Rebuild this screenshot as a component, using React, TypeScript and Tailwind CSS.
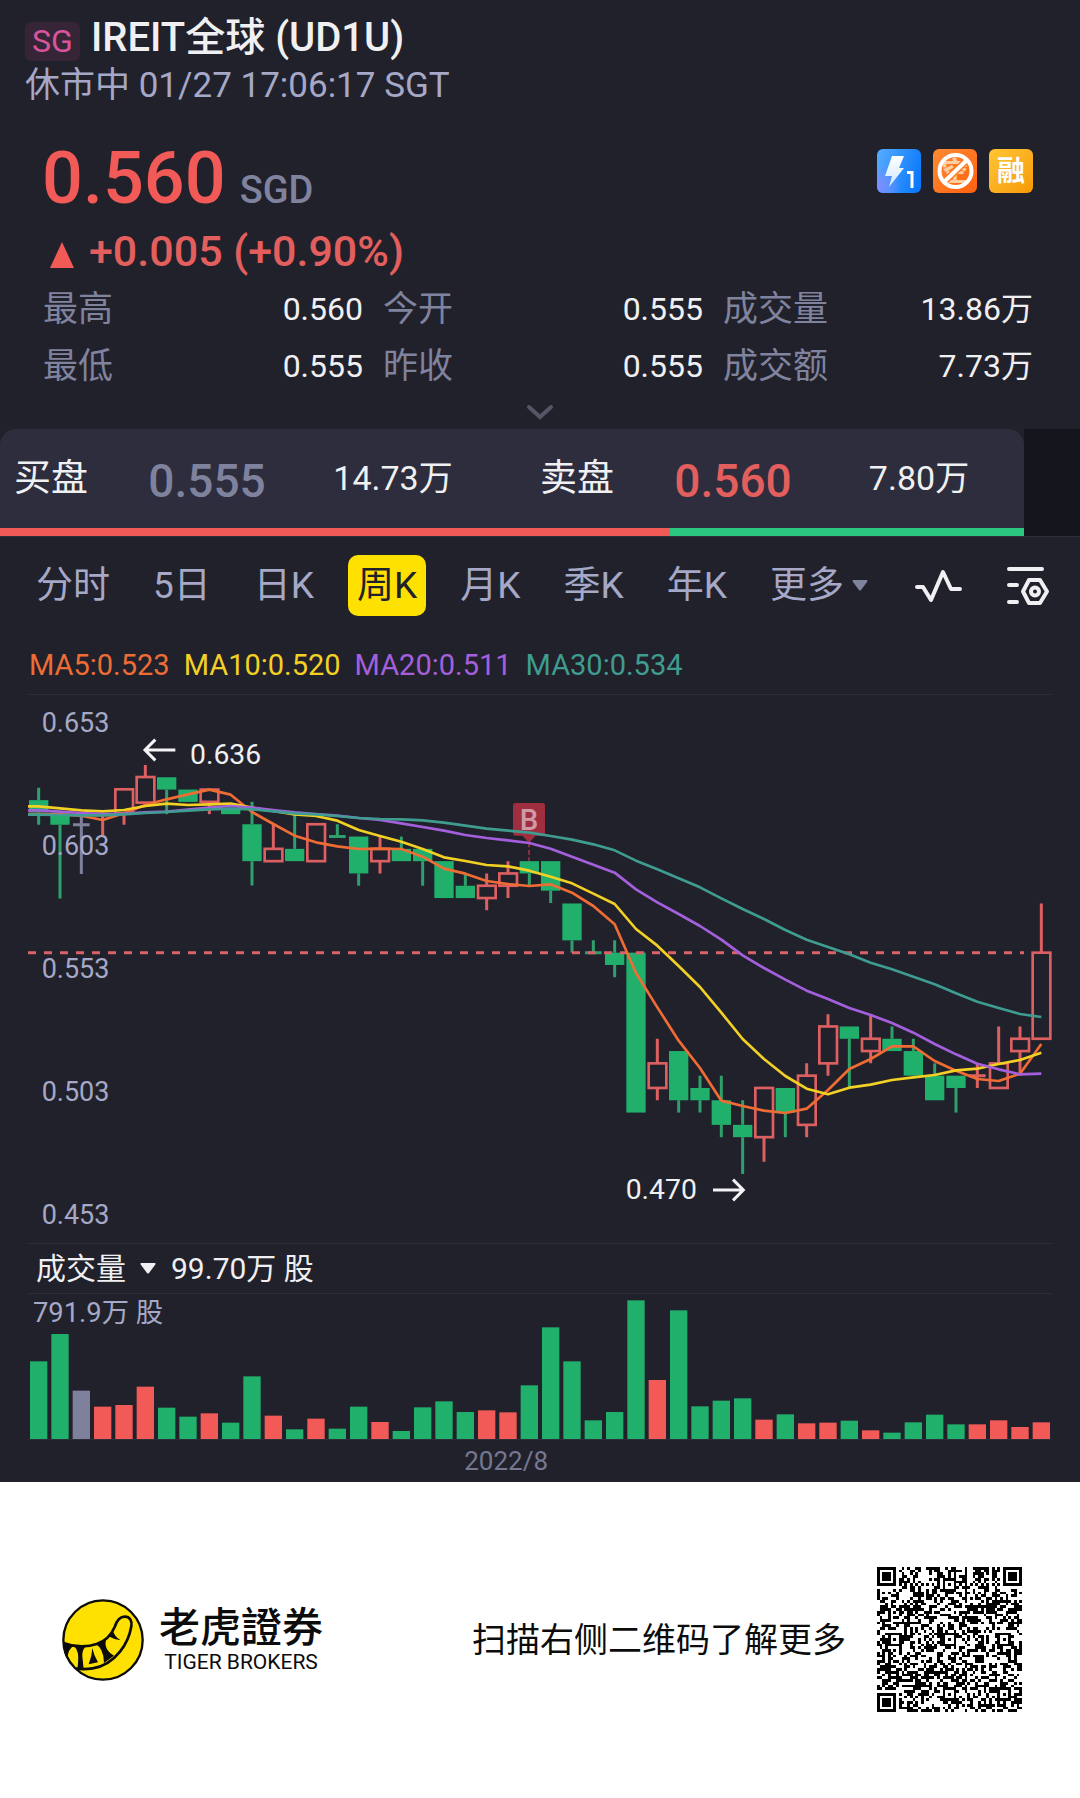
import { useMemo, useState } from "react";

type Tone = "up" | "down" | "flat";

// [tone, high, body top, body bottom, low, volume]
type Candle = [Tone, number, number, number, number, number];

const CANDLES: Candle[] = [
  ["down", 0.627, 0.622, 0.617, 0.612, 233],
  ["down", 0.617, 0.617, 0.612, 0.582, 315],
  ["flat", 0.616, 0.612, 0.612, 0.592, 145],
  ["up", 0.616, 0.616, 0.616, 0.607, 97],
  ["up", 0.6264, 0.6264, 0.6167, 0.612, 102],
  ["up", 0.6363, 0.6314, 0.621, 0.621, 157],
  ["down", 0.6313, 0.6313, 0.6263, 0.6163, 94],
  ["down", 0.6263, 0.6263, 0.6213, 0.6213, 67],
  ["up", 0.6263, 0.6263, 0.6213, 0.6163, 77],
  ["down", 0.6185, 0.6185, 0.6163, 0.6163, 49],
  ["down", 0.6213, 0.6122, 0.5972, 0.5873, 188],
  ["up", 0.6122, 0.6022, 0.5972, 0.5972, 70],
  ["down", 0.616, 0.6022, 0.5972, 0.5972, 29],
  ["up", 0.6122, 0.6122, 0.5972, 0.5972, 61],
  ["down", 0.6122, 0.6072, 0.6072, 0.6072, 31],
  ["down", 0.6072, 0.6072, 0.5922, 0.5872, 97],
  ["up", 0.6072, 0.6022, 0.5972, 0.5922, 51],
  ["down", 0.6072, 0.6022, 0.5972, 0.5972, 24],
  ["down", 0.6022, 0.6022, 0.5972, 0.5872, 95],
  ["down", 0.5972, 0.5972, 0.5822, 0.5822, 113],
  ["down", 0.5922, 0.5872, 0.5822, 0.5822, 81],
  ["up", 0.5922, 0.5872, 0.5822, 0.5772, 86],
  ["up", 0.5972, 0.5922, 0.5872, 0.5822, 80],
  ["down", 0.5972, 0.5972, 0.5922, 0.5872, 161],
  ["down", 0.5972, 0.5972, 0.5852, 0.5802, 335],
  ["down", 0.58, 0.58, 0.565, 0.56, 233],
  ["down", 0.565, 0.56, 0.56, 0.56, 56],
  ["down", 0.565, 0.56, 0.555, 0.55, 81],
  ["down", 0.56, 0.56, 0.495, 0.495, 416],
  ["up", 0.525, 0.515, 0.505, 0.5, 177],
  ["down", 0.52, 0.52, 0.5, 0.495, 386],
  ["down", 0.51, 0.505, 0.5, 0.495, 98],
  ["down", 0.51, 0.5, 0.49, 0.485, 115],
  ["down", 0.5, 0.49, 0.485, 0.47, 122],
  ["up", 0.505, 0.505, 0.485, 0.475, 58],
  ["down", 0.505, 0.505, 0.495, 0.485, 74],
  ["up", 0.515, 0.51, 0.49, 0.485, 47],
  ["up", 0.535, 0.53, 0.515, 0.51, 49],
  ["down", 0.53, 0.53, 0.525, 0.505, 55],
  ["up", 0.535, 0.525, 0.52, 0.515, 26],
  ["down", 0.53, 0.525, 0.52, 0.52, 19],
  ["down", 0.525, 0.52, 0.51, 0.51, 50],
  ["down", 0.515, 0.51, 0.5, 0.5, 73],
  ["down", 0.51, 0.51, 0.505, 0.495, 44],
  ["up", 0.515, 0.51, 0.51, 0.505, 44],
  ["up", 0.53, 0.515, 0.505, 0.505, 56],
  ["up", 0.53, 0.525, 0.52, 0.51, 36],
  ["up", 0.58, 0.56, 0.525, 0.525, 50],
];

// Moving averages, already in chart units (three units to a pixel)
const AVERAGES = [
  {
    color: "#ef6d35",
    points: [
      357, 358, 362, 375, 355, 330, 313, 298, 284, 299, 351, 387, 422, 442, 454, 462, 461, 462, 485, 521, 536, 558,
      567, 573, 568, 593, 633, 688, 834, 937, 1037, 1119, 1217, 1233, 1247, 1254, 1241, 1185, 1122, 1092, 1054, 1054,
      1098, 1127, 1152, 1158, 1136, 1047,
    ],
  },
  {
    color: "#f3d024",
    points: [
      334, 340, 346, 349, 345, 333, 326, 330, 328, 326, 338, 348, 358, 363, 377, 405, 423, 440, 462, 487, 498, 510,
      514, 527, 545, 565, 596, 627, 702, 752, 813, 876, 953, 1032, 1092, 1143, 1181, 1198, 1178, 1169, 1155, 1147,
      1140, 1126, 1121, 1107, 1095, 1073,
    ],
  },
  {
    color: "#a460dc",
    points: [
      346, 350, 354, 357, 356, 352, 350, 344, 338, 333, 338, 345, 352, 357, 362, 369, 375, 385, 396, 407, 420, 429,
      436, 444, 461, 485, 509, 533, 583, 622, 657, 693, 734, 781, 819, 854, 887, 912, 939, 960, 984, 1013, 1047, 1078,
      1106, 1123, 1138, 1136,
    ],
  },
  {
    color: "#3f9c90",
    points: [
      359, 360, 361, 361, 358, 354, 351, 347, 343, 341, 343, 349, 355, 358, 363, 369, 372, 373, 376, 383, 392, 401,
      407, 413, 423, 434, 448, 466, 497, 523, 550, 577, 610, 642, 672, 705, 734, 756, 778, 803, 823, 845, 868, 895,
      920, 939, 957, 966,
    ],
  },
];

const LINE_COLORS: Record<Tone, string> = { up: "#dc6061", down: "#2fa06c", flat: "#7f809c" };
const FILL_COLORS: Record<Tone, string> = { up: "#f25a57", down: "#20b06c", flat: "#7f809c" };

const STEP = 64;
const centerX = (i: number) => STEP / 2 + STEP * i;
const priceY = (price: number) => 773 + (0.56 - price) * 7380;

const STATS = [
  ["最高", "0.560"],
  ["今开", "0.555"],
  ["成交量", "13.86万"],
  ["最低", "0.555"],
  ["昨收", "0.555"],
  ["成交额", "7.73万"],
];

const TABS = ["分时", "5日", "日K", "周K", "月K", "季K", "年K"];

const CandleShape = ({ candle, index }: { candle: Candle; index: number }) => {
  const [tone, high, top, bottom, low] = candle;
  const x = centerX(index);
  const color = LINE_COLORS[tone];

  if (top === bottom) {
    return (
      <g stroke={color} strokeWidth={9}>
        <path d={`M${x} ${priceY(high)}V${priceY(low)}M${x - 25} ${priceY(top)}h50`} />
      </g>
    );
  }

  return (
    <g>
      <path d={`M${x} ${priceY(high)}V${priceY(top)}M${x} ${priceY(bottom)}V${priceY(low)}`} stroke={color} strokeWidth={9} />
      {tone === "down" ? (
        <rect x={x - 29} y={priceY(top)} width={58} height={priceY(bottom) - priceY(top)} fill={FILL_COLORS.down} />
      ) : (
        <rect
          x={x - 26}
          y={priceY(top)}
          width={53}
          height={priceY(bottom) - priceY(top)}
          fill="none"
          stroke={color}
          strokeWidth={8}
        />
      )}
    </g>
  );
};

const PriceChart = () => (
  <svg viewBox="0 0 3072 1644" className="block w-full" role="img" aria-label="周K">
    {CANDLES.map((candle, i) => (
      <CandleShape key={i} candle={candle} index={i} />
    ))}
    <path d="M0 773H2988" stroke="#d9626a" strokeWidth={9} strokeDasharray="24 24" />

    <g fill="#a5a8c6" fontSize={81}>
      <text x={41} y={110}>0.653</text>
      <text x={41} y={479}>0.603</text>
      <text x={41} y={848}>0.553</text>
      <text x={41} y={1217}>0.503</text>
      <text x={41} y={1586}>0.453</text>
    </g>

    {/* buy marker */}
    <path d="M1503 443V497" stroke="#8a2f3f" strokeWidth={6} strokeDasharray="14 8" />
    <path d="M1463 324h80q8 0 8 8v82q0 8-8 8h-20l-20 21-20-21h-20q-8 0-8-8v-82q0-8 8-8Z" fill="#a02e41" />
    <text x={1503} y={406} textAnchor="middle" fontSize={88} fontWeight={500} fill="#cf9aa4">
      B
    </text>

    {AVERAGES.map(({ color, points }) => (
      <polyline
        key={color}
        points={`0,${points[0]} ` + points.map((y, i) => `${centerX(i)},${y}`).join(" ")}
        fill="none"
        stroke={color}
        strokeWidth={8}
        strokeLinejoin="round"
      />
    ))}

    <g fill="#f0f0f2" fontSize={85}>
      <text x={486} y={208}>0.636</text>
      <text x={1793} y={1513}>0.470</text>
    </g>
    <g fill="none" stroke="#f4f4f6" strokeWidth={9}>
      <path d="M442 165H352M382 134l-31 31 31 31" />
      <path d="M2055 1485h90M2115 1454l31 31-31 31" />
    </g>
  </svg>
);

const VolumeChart = () => (
  <svg viewBox="0 0 3072 435" className="block w-full" role="img" aria-label="成交量">
    {CANDLES.map(([tone, , , , , volume], i) => (
      <rect key={i} x={centerX(i) - 26} y={435 - volume} width={52} height={volume} fill={FILL_COLORS[tone]} />
    ))}
    <text x={15} y={84} fontSize={82} fill="#a5a8c6">
      791.9万 股
    </text>
  </svg>
);

const QR_SIZE = 53;

const nearSquare = (x: number, y: number, cx: number, cy: number) => Math.max(Math.abs(x - cx), Math.abs(y - cy));

const isDark = (x: number, y: number) => {
  const last = QR_SIZE - 4;
  for (const [cx, cy] of [[3, 3], [last, 3], [3, last]]) {
    const d = nearSquare(x, y, cx, cy);
    if (d <= 4) return d !== 4 && d !== 2;
  }
  for (const [cx, cy] of [[26, 6], [6, 26], [26, 26], [46, 26], [26, 46], [46, 46]]) {
    const d = nearSquare(x, y, cx, cy);
    if (d <= 2) return d !== 1;
  }
  if (x === 6 || y === 6) return (x + y) % 2 === 0;
  let h = Math.imul(x + 11, 374761393) ^ Math.imul(y + 7, 668265263);
  h = Math.imul(h ^ (h >>> 13), 1274126177);
  return ((h ^ (h >>> 16)) & 1) === 1;
};

const QrCode = () => {
  const d = useMemo(() => {
    let path = "";
    for (let y = 0; y < QR_SIZE; y++) {
      for (let x = 0; x < QR_SIZE; x++) {
        if (isDark(x, y)) path += `M${x} ${y}h1v1h-1z`;
      }
    }
    return path;
  }, []);

  return (
    <svg viewBox="0 0 53 53" className="size-[145px] shrink-0" shapeRendering="crispEdges" role="img" aria-label="二维码">
      <path d={d} fill="#000" />
    </svg>
  );
};

const TigerLogo = () => (
  <svg viewBox="0 0 246 246" className="size-[82px] shrink-0" aria-hidden="true">
    <circle cx="123" cy="123" r="119" fill="#fee100" stroke="#0c0c0c" strokeWidth="7" />
    <path
      d="M4 132C40 146 80 144 104 135C130 126 148 108 158 84C164 66 172 53 188 53C204 53 211 66 208 82C203 112 192 136 174 158C150 188 120 204 92 208C74 211 58 211 42 209"
      fill="none"
      stroke="#0c0c0c"
      strokeWidth="8"
    />
    <path
      d="M4 131L34 141Q19 150 16 178L6 160ZM36 141L70 143Q60 154 61 172L65 210L46 210Q50 182 48 164Q46 150 36 141ZM91 147Q95 168 108 190L80 196Q90 172 91 147ZM102 136L134 118Q126 136 136 152Q144 164 156 170L126 192Q126 170 118 154Q112 142 102 136ZM140 112L152 94Q158 114 176 124Q156 122 140 112Z"
      fill="#0c0c0c"
    />
  </svg>
);

const App = () => {
  const [tab, setTab] = useState("周K");

  return (
    <main className="min-h-screen bg-white font-['Roboto','Noto_Sans_CJK_SC',sans-serif]">
      <section className="bg-[#21212b]">
        <header className="px-[25px] pt-4">
          <div className="flex h-[44px] items-center gap-[11px]">
            <span className="mt-[6px] flex h-[39px] w-[55px] items-center justify-center rounded-md bg-[#352536] text-[32px] leading-none text-[#d9559b]">
              SG
            </span>
            <h1 className="text-[40px] leading-[44px] font-medium text-[#f0f0f2]">IREIT全球 (UD1U)</h1>
          </div>
          <p className="mt-1 text-[35px] leading-[44px] text-[#a5a8c6]">休市中 01/27 17:06:17 SGT</p>
        </header>

        <div className="flex items-start justify-between pt-[31px] pr-[47px] pl-[42px]">
          <div>
            <p className="flex items-baseline gap-[14px] font-medium">
              <span className="text-[72px] leading-[80px] text-[#f25a57]">0.560</span>
              <span className="text-[38px] leading-[44px] text-[#80839e]">SGD</span>
            </p>
            <p className="mt-[7px] flex items-center gap-[15px] pl-2 text-[43px] leading-[50px] font-medium text-[#e35f5e]">
              <svg viewBox="0 0 24 26" className="mt-2 h-[26px] w-6" aria-hidden="true">
                <path d="M12 0L24 26H0Z" fill="#f25a57" />
              </svg>
              +0.005 (+0.90%)
            </p>
          </div>

          <div className="flex gap-3 pt-[10px]">
            <svg viewBox="0 0 44 44" className="size-[44px]" aria-hidden="true">
              <defs>
                <linearGradient id="quote" x1="0" y1="0.3" x2="1" y2="0.6">
                  <stop offset="0" stopColor="#52a9ff" />
                  <stop offset="1" stopColor="#0b79fb" />
                </linearGradient>
                <radialGradient id="corner" cx="0.05" cy="0.85" r="0.5">
                  <stop offset="0" stopColor="#7f8cff" />
                  <stop offset="1" stopColor="#7f8cff" stopOpacity="0" />
                </radialGradient>
                <linearGradient id="bolt" x1="0" y1="0" x2="0" y2="1">
                  <stop offset="0" stopColor="#fff" />
                  <stop offset="1" stopColor="#cfe6ff" />
                </linearGradient>
              </defs>
              <rect width="44" height="44" rx="6" fill="url(#quote)" />
              <rect width="44" height="44" rx="6" fill="url(#corner)" />
              <path d="M15 7H27L22 19H27L12 38L15 27H8Z" fill="url(#bolt)" />
              <path d="M30 23.500H35V39" fill="none" stroke="#fff" strokeWidth="3" />
            </svg>
            <svg viewBox="0 0 44 44" className="size-[44px]" aria-hidden="true">
              <defs>
                <linearGradient id="short" x1="0" y1="0" x2="1" y2="1">
                  <stop offset="0" stopColor="#ff8c33" />
                  <stop offset="1" stopColor="#ff6010" />
                </linearGradient>
              </defs>
              <rect width="44" height="44" rx="6" fill="url(#short)" />
              <text x="22" y="32" textAnchor="middle" fontSize="27" fontWeight="700" fill="#ffcda3">
                空
              </text>
              <path d="M10.500 33.500L34 11" stroke="#ff7a22" strokeWidth="7" />
              <circle cx="22.500" cy="22" r="16" fill="none" stroke="#fff" strokeWidth="4" />
              <path d="M11 33L34 11" stroke="#fff" strokeWidth="4" />
            </svg>
            <span className="flex size-[44px] items-center justify-center rounded-md bg-linear-to-br from-[#ffc533] to-[#f59a00] pt-[2px] text-[28px] leading-none font-bold text-white">
              融
            </span>
          </div>
        </div>

        <dl className="mt-[5px] grid grid-cols-[320fr_320fr_310fr] gap-x-5 pr-[47px] pl-[43px] leading-[57px]">
          {STATS.map(([label, value]) => (
            <div key={label} className="flex items-center justify-between">
              <dt className="text-[35px] text-[#80839e]">{label}</dt>
              <dd className="text-[32px] text-[#f0f0f2]">{value}</dd>
            </div>
          ))}
        </dl>

        <button type="button" aria-label="展开" className="flex h-[34px] w-full items-center justify-center">
          <svg viewBox="0 0 28 16" className="h-4 w-7" aria-hidden="true">
            <path d="M3 3L14 13L25 3" fill="none" stroke="#555768" strokeWidth="4" strokeLinecap="round" />
          </svg>
        </button>

        <div className="flex bg-[#15151e]">
          <div className="flex-1 bg-[#21212b]">
            <div className="overflow-hidden rounded-t-2xl bg-[#2d2d3d]">
              <div className="grid h-[99px] grid-cols-[526fr_498fr] items-center text-[#f0f0f2]">
                <div className="grid grid-cols-[107px_172px_200px] items-center pl-[14px]">
                  <span className="text-[37px]">买盘</span>
                  <span className="pt-1 text-center text-[46px] leading-[56px] font-medium text-[#7f829d]">0.555</span>
                  <span className="text-center text-[34px]">14.73万</span>
                </div>
                <div className="grid grid-cols-[107px_172px_200px] items-center pl-[14px]">
                  <span className="text-[37px]">卖盘</span>
                  <span className="pt-1 text-center text-[46px] leading-[56px] font-medium text-[#e35f5e]">0.560</span>
                  <span className="text-center text-[34px]">7.80万</span>
                </div>
              </div>
              <div className="flex h-2">
                <div className="w-[65.4%] bg-[#f25a57]" />
                <div className="flex-1 bg-[#29c780]" />
              </div>
            </div>
          </div>
          <div className="w-[56px]" />
        </div>

        <nav className="flex items-center border-t border-[#2d2e3a] pt-[18px] pr-[30px] pl-[27px]">
          <div className="flex items-center gap-[25px]">
            {TABS.map((name) => (
              <button
                key={name}
                type="button"
                onClick={() => setTab(name)}
                className={`h-[61px] rounded-[10px] px-[9px] text-[37px] leading-none ${
                  tab === name ? "bg-[#fee100] text-[#21212b]" : "text-[#a5a8c6]"
                }`}
              >
                {name}
              </button>
            ))}
            <button type="button" className="flex h-[61px] items-center gap-2 px-[9px] text-[37px] leading-none text-[#a5a8c6]">
              更多
              <svg viewBox="0 0 16 11" className="h-[11px] w-4" aria-hidden="true">
                <path d="M1 0H15Q16 0 15 2L9 10Q8 11 7 10L1 2Q0 0 1 0Z" fill="#80839e" />
              </svg>
            </button>
          </div>
          <div className="ml-auto flex items-center gap-[44px]">
            <button type="button" aria-label="指标">
              <svg viewBox="0 0 48 34" className="block h-[34px] w-12" aria-hidden="true">
                <path
                  d="M3 18H9L17 31L29 3L37 20H46"
                  fill="none"
                  stroke="#f0f0f2"
                  strokeWidth="4"
                  strokeLinecap="round"
                  strokeLinejoin="round"
                />
              </svg>
            </button>
            <button type="button" aria-label="设置">
              <svg viewBox="0 0 44 40" className="block h-10 w-11" aria-hidden="true">
                <g fill="none" stroke="#f0f0f2" strokeWidth="4" strokeLinecap="round" strokeLinejoin="round">
                  <path d="M3 3H36M3 19H11M3 36H11" />
                  <path d="M23 14H34L41 25.500L34 37H23L17 25.500Z" />
                  <circle cx="29" cy="25.500" r="4" />
                </g>
              </svg>
            </button>
          </div>
        </nav>

        <div className="mt-[29px] flex gap-[14px] px-[29px] pb-[9px] text-[29px] leading-[40px]">
          <span className="text-[#ef6d35]">MA5:0.523</span>
          <span className="text-[#f3d024]">MA10:0.520</span>
          <span className="text-[#a460dc]">MA20:0.511</span>
          <span className="text-[#3f9c90]">MA30:0.534</span>
        </div>

        <div className="px-7">
          <div className="border-t border-[#2d2e3a]">
            <PriceChart />
          </div>
          <div className="flex h-[51px] items-center border-y border-[#2d2e3a] pl-2 text-[30px] leading-none text-[#f0f0f2]">
            <button type="button" className="flex items-center gap-[14px]">
              成交量
              <svg viewBox="0 0 16 11" className="h-[11px] w-4" aria-hidden="true">
                <path d="M1 0H15Q16 0 15 2L9 10Q8 11 7 10L1 2Q0 0 1 0Z" fill="#f0f0f2" />
              </svg>
            </button>
            <span className="ml-[15px]">99.70万 股</span>
          </div>
          <VolumeChart />
          <p className="border-t border-[#2d2e3a] pl-[42.6%] text-[26px] leading-[42px] text-[#757891]">2022/8</p>
        </div>
      </section>

      <footer className="flex items-center pt-[85px] pr-[58px] pb-[86px] pl-[62px] text-[#0c0c0c]">
        <TigerLogo />
        <div className="ml-[15px] flex flex-col items-center">
          <span className="text-[41px] leading-[44px] font-medium">老虎證券</span>
          <span className="text-[21px] leading-6">TIGER BROKERS</span>
        </div>
        <p className="mr-[31px] ml-auto text-[34px] leading-[44px]">扫描右侧二维码了解更多</p>
        <QrCode />
      </footer>
    </main>
  );
};

export default App;
